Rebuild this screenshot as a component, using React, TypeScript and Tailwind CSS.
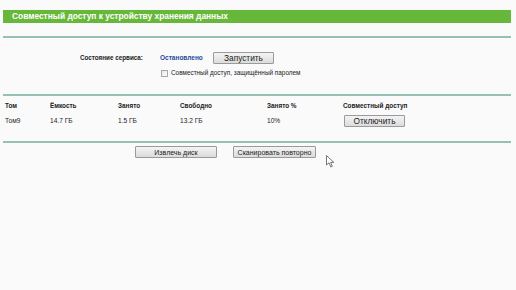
import React from 'react';

const Btn: React.FC<{ label: string; className?: string }> = ({ label, className = '' }) => (
  <button
    className={`h-[12px] border border-[#9a9a9a] bg-gradient-to-b from-[#f4f4f4] to-[#dcdcdc] leading-none text-[#222] flex items-center justify-center rounded-[1px] ${className}`}
  >
    {label}
  </button>
);

const Divider: React.FC = () => <div className="h-[2px] bg-[#94c1b3]" />;

const App: React.FC = () => {
  const cols = 'grid grid-cols-[45px_68px_62px_87px_76px_1fr]';

  return (
    <div className="relative w-[516px] h-[290px] bg-[#fafafa] text-[#222] font-['Liberation_Sans',Arial,sans-serif]">
      <div className="px-[3px] pt-[10px] mr-[2px]">
        <div className="h-[13px] bg-[#67b73a] text-white font-bold text-[8.4px] pl-[9px] flex items-center">
          Совместный доступ к устройству хранения данных
        </div>

        <div className="mt-[13px]">
          <Divider />
        </div>

        <div className="mt-[14px] flex items-center h-[12px]">
          <span className="ml-[77px] w-[80px] font-bold text-[6.3px]">Состояние сервиса:</span>
          <span className="w-[53px] font-bold text-[6.5px] text-[#1f4aa0]">Остановлено</span>
          <Btn label="Запустить" className="w-[61px] text-[8.3px]" />
        </div>

        <div className="mt-[4px] flex items-center h-[10px] pl-[158px]">
          <span className="w-[7px] h-[7px] border border-[#a8a8a8] bg-gradient-to-br from-[#e8e8e8] to-[#fdfdfd]" />
          <span className="ml-[3px] text-[6.4px]">Совместный доступ, защищённый паролем</span>
        </div>

        <div className="mt-[16px]">
          <Divider />
        </div>

        <div className={`${cols} mt-[5px] h-[10px] items-center pl-[2px] font-bold text-[6.4px]`}>
          <span>Том</span>
          <span>Ёмкость</span>
          <span>Занято</span>
          <span>Свободно</span>
          <span>Занято %</span>
          <span>Совместный доступ</span>
        </div>

        <div className={`${cols} mt-[3px] h-[14px] items-center pl-[2px] text-[6.6px]`}>
          <span>Том9</span>
          <span>14.7 ГБ</span>
          <span>1.5 ГБ</span>
          <span>13.2 ГБ</span>
          <span>10%</span>
          <span>
            <Btn label="Отключить" className="w-[61px] ml-[1px] text-[8.3px]" />
          </span>
        </div>

        <div className="mt-[13px]">
          <Divider />
        </div>

        <div className="mt-[3px] flex">
          <Btn label="Извлечь диск" className="ml-[132px] w-[82px] text-[7px]" />
          <Btn label="Сканировать повторно" className="ml-[16px] w-[83px] text-[7px]" />
        </div>
      </div>

      {/* mouse pointer */}
      <svg className="absolute left-[326px] top-[155px]" width="9" height="13" viewBox="0 0 9 13">
        <path d="M0.5 0.5 L0.5 10 L3 7.8 L4.8 12 L6.3 11.3 L4.6 7.4 L7.8 7.4 Z" fill="#fff" stroke="#555" strokeWidth="0.8" />
      </svg>
    </div>
  );
};

export default App;
